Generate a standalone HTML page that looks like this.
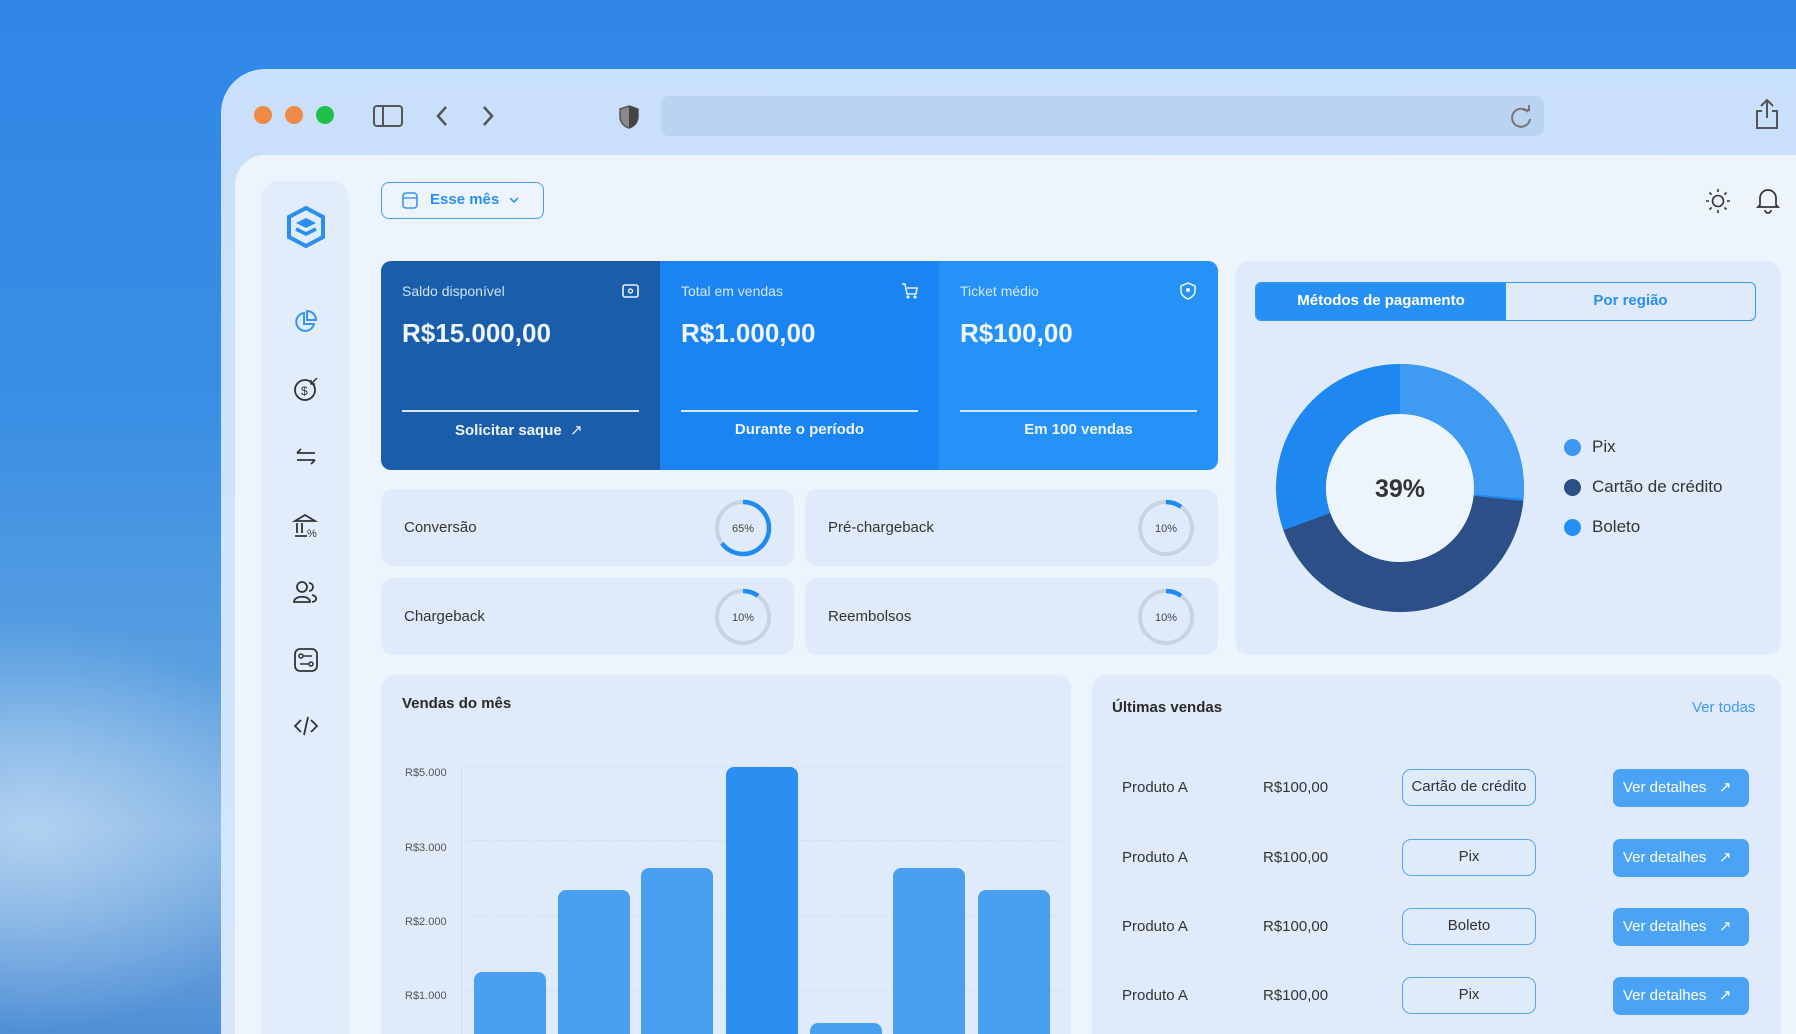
<!DOCTYPE html>
<html style="width:1796px;height:1034px;overflow:hidden"><head><meta charset="utf-8"><style>
*{margin:0;padding:0;box-sizing:border-box}
body{width:1796px;height:1034px;overflow:hidden;font-family:"Liberation Sans",sans-serif;position:relative;
background:linear-gradient(180deg,#2f86e6 0%,#3a8fe4 40%,#5a9fe0 65%,#7fb2e3 80%,#4f8fd6 100%);}
.cloud{position:absolute;left:-80px;top:620px;width:380px;height:414px;background:radial-gradient(ellipse at 30% 50%,rgba(220,235,250,.55),rgba(200,225,250,0) 70%)}
.win{position:absolute;left:221px;top:69px;width:1575px;height:965px;border-radius:44px 0 0 0;background:linear-gradient(180deg,#c9e0fa,#d6e7fb);}
.a{position:absolute}
.dot{position:absolute;top:106px;width:18px;height:18px;border-radius:50%}
.inner{position:absolute;left:235px;top:155px;width:1561px;height:879px;border-radius:30px 0 0 0;background:#edf4fd}
.side{position:absolute;left:261px;top:181px;width:88px;height:853px;border-radius:18px 18px 0 0;background:#e1edfb}
.card{position:absolute;background:#dfebfb;border-radius:12px}
.t{position:absolute;white-space:nowrap}
.pill{position:absolute;left:1402px;width:134px;height:37px;border:1.5px solid #5aa6f2;border-radius:9px;font-size:15px;color:#333;text-align:center;line-height:34px}
.btn{position:absolute;left:1613px;width:136px;height:38px;background:#4aa3f4;border-radius:7px;color:#fff;font-size:15px;line-height:38px;padding-left:10px}
.row{position:absolute;font-size:15px;color:#333}
.ylab{position:absolute;left:405px;font-size:11px;color:#555}
.bar{position:absolute;width:72px;background:#4aa0f0;border-radius:8px 8px 0 0;bottom:0}
</style></head><body>
<div class="cloud"></div>
<div class="win"></div>
<div class="dot" style="left:254px;background:#ee8a45"></div>
<div class="dot" style="left:285px;background:#ee8a45"></div>
<div class="dot" style="left:316px;background:#1fbf4a"></div>
<svg class="a" style="left:372px;top:104px" width="32" height="24" viewBox="0 0 32 24"><rect x="2" y="2" width="28" height="20" rx="3" fill="none" stroke="#555" stroke-width="2"/><line x1="11" y1="2" x2="11" y2="22" stroke="#555" stroke-width="2"/></svg>
<svg class="a" style="left:432px;top:104px" width="70" height="24"><path d="M14 3 L6 12 L14 21" fill="none" stroke="#555" stroke-width="2.5"/><path d="M52 3 L60 12 L52 21" fill="none" stroke="#555" stroke-width="2.5"/></svg>
<svg class="a" style="left:618px;top:104px" width="22" height="26"><path d="M11 2 L20 5 V13 C20 19 15 23 11 24 C7 23 2 19 2 13 V5 Z" fill="#888" stroke="#555" stroke-width="1.5"/><path d="M11 2 V24 C15 23 20 19 20 13 V5Z" fill="#444"/></svg>
<div class="a" style="left:661px;top:96px;width:883px;height:40px;border-radius:8px;background:#b9d3f1"></div>
<svg class="a" style="left:1508px;top:104px" width="26" height="26"><path d="M20 8 A9 9 0 1 0 22 15" fill="none" stroke="#777" stroke-width="2"/><path d="M15 6 H21 V1" fill="none" stroke="#777" stroke-width="2"/></svg>
<svg class="a" style="left:1754px;top:98px" width="26" height="32"><path d="M13 2 V20 M7 8 L13 2 L19 8" fill="none" stroke="#555" stroke-width="2"/><path d="M8 13 H3 V30 H23 V13 H18" fill="none" stroke="#555" stroke-width="2"/></svg>

<div class="inner"></div>
<div class="side"></div>
<svg class="a" style="left:286px;top:206px" width="40" height="42" viewBox="0 0 40 42"><path d="M20 2 L37 11 V31 L20 40 L3 31 V11Z" fill="none" stroke="#2a8ff0" stroke-width="4"/><path d="M20 12 L30 17 L20 22 L10 17Z" fill="#2a8ff0"/><path d="M10 23 L20 28 L30 23" fill="none" stroke="#2a8ff0" stroke-width="3.5"/></svg>
<svg class="a" style="left:293px;top:309px" width="26" height="26"><path d="M11 4 A9 9 0 1 0 21 15 H11Z" fill="none" stroke="#3a95f0" stroke-width="2"/><path d="M14 2 A9 9 0 0 1 23 11 H14Z" fill="none" stroke="#3a95f0" stroke-width="2"/></svg>
<svg class="a" style="left:293px;top:376px" width="26" height="26"><circle cx="12" cy="14" r="10" fill="none" stroke="#333" stroke-width="1.8"/><text x="8" y="19" font-size="12" fill="#333" font-family="Liberation Sans">$</text><path d="M24 2 L18 8 M18 4 V8 H22" stroke="#333" fill="none" stroke-width="1.5"/></svg>
<svg class="a" style="left:293px;top:445px" width="26" height="24"><path d="M4 8 H22 M8 4 L4 8 M4 15 H22 M18 19 L22 15" fill="none" stroke="#333" stroke-width="1.8"/></svg>
<svg class="a" style="left:292px;top:512px" width="28" height="28"><path d="M3 9 L13 3 L23 9 Z M5 11 V21 M10 11 V21 M3 24 H15" fill="none" stroke="#333" stroke-width="1.8"/><text x="15" y="25" font-size="11" fill="#333" font-family="Liberation Sans">%</text></svg>
<svg class="a" style="left:292px;top:580px" width="28" height="26"><circle cx="10" cy="7" r="5" fill="none" stroke="#333" stroke-width="1.8"/><path d="M2 22 C2 15 18 15 18 22 Z" fill="none" stroke="#333" stroke-width="1.8"/><path d="M17 3 A4 4 0 0 1 17 11 M20 15 C25 16 26 21 20 22" fill="none" stroke="#333" stroke-width="1.8"/></svg>
<svg class="a" style="left:293px;top:647px" width="26" height="26"><rect x="2" y="2" width="22" height="22" rx="5" fill="none" stroke="#333" stroke-width="1.8"/><circle cx="8" cy="9" r="2" fill="none" stroke="#333" stroke-width="1.5"/><path d="M10 9 H19 M7 17 H16" stroke="#333" stroke-width="1.5"/><circle cx="18" cy="17" r="2" fill="none" stroke="#333" stroke-width="1.5"/></svg>
<svg class="a" style="left:293px;top:715px" width="26" height="22"><path d="M8 5 L2 11 L8 17 M18 5 L24 11 L18 17 M15 2 L11 20" fill="none" stroke="#333" stroke-width="1.8"/></svg>

<div class="a" style="left:381px;top:182px;width:163px;height:37px;border:1.5px solid #4a9cf0;border-radius:8px"></div>
<svg class="a" style="left:402px;top:191px" width="16" height="18"><rect x="1" y="2" width="14" height="15" rx="3" fill="none" stroke="#3a95f0" stroke-width="1.6"/><line x1="1" y1="7" x2="15" y2="7" stroke="#3a95f0" stroke-width="1.4"/></svg>
<div class="t" style="left:430px;top:191px;font-size:15px;color:#2a8ff0;font-weight:bold">Esse mês</div>
<svg class="a" style="left:508px;top:195px" width="12" height="10"><path d="M2 3 L6 7 L10 3" fill="none" stroke="#3a95f0" stroke-width="1.6"/></svg>
<svg class="a" style="left:1704px;top:187px" width="28" height="28"><circle cx="14" cy="14" r="5.5" fill="none" stroke="#333" stroke-width="1.6"/><path d="M14 2V5M14 23V26M2 14H5M23 14H26M5.5 5.5L7.6 7.6M20.4 20.4L22.5 22.5M5.5 22.5L7.6 20.4M20.4 7.6L22.5 5.5" stroke="#333" stroke-width="1.6"/></svg>
<svg class="a" style="left:1755px;top:186px" width="26" height="28"><path d="M5 19 V12 A8 8 0 0 1 21 12 V19 L23 21 H3Z" fill="none" stroke="#333" stroke-width="1.7"/><path d="M10 24 A3 3 0 0 0 16 24" fill="none" stroke="#333" stroke-width="1.7"/></svg>

<div class="a" style="left:381px;top:261px;width:837px;height:209px;border-radius:10px;overflow:hidden;display:flex">
<div style="width:279px;background:#1a5eab"></div>
<div style="width:279px;background:#1b84f3"></div>
<div style="width:279px;background:#2592f7"></div>
</div>
<div class="t" style="left:402px;top:283px;font-size:14px;color:#cfe1f7">Saldo disponível</div>
<div class="t" style="left:681px;top:283px;font-size:14px;color:#d6e8fd">Total em vendas</div>
<div class="t" style="left:960px;top:283px;font-size:14px;color:#d6e8fd">Ticket médio</div>
<div class="t" style="left:402px;top:318px;font-size:26px;font-weight:bold;color:#f0f6fe">R$15.000,00</div>
<div class="t" style="left:681px;top:318px;font-size:26px;font-weight:bold;color:#f0f6fe">R$1.000,00</div>
<div class="t" style="left:960px;top:318px;font-size:26px;font-weight:bold;color:#f0f6fe">R$100,00</div>
<svg class="a" style="left:622px;top:283px" width="18" height="16"><rect x="1" y="2" width="15" height="12" rx="2" fill="none" stroke="#e6f0fc" stroke-width="1.6"/><circle cx="8.5" cy="8" r="2" fill="none" stroke="#e6f0fc" stroke-width="1.4"/></svg>
<svg class="a" style="left:901px;top:282px" width="18" height="18"><path d="M1 2 H4 L6 12 H15 L16 6 H6" fill="none" stroke="#e6f0fc" stroke-width="1.6"/><circle cx="7" cy="15" r="1.6" fill="#e6f0fc"/><circle cx="14" cy="15" r="1.6" fill="#e6f0fc"/></svg>
<svg class="a" style="left:1180px;top:282px" width="16" height="18"><path d="M8 1 L15 4 V9 C15 13 11 16 8 17 C5 16 1 13 1 9 V4Z" fill="none" stroke="#e6f0fc" stroke-width="1.6"/><circle cx="8" cy="8" r="2" fill="#e6f0fc"/></svg>
<div class="a" style="left:402px;top:410px;width:237px;height:2px;background:#d6e5f8"></div>
<div class="a" style="left:681px;top:410px;width:237px;height:2px;background:#d6e5f8"></div>
<div class="a" style="left:960px;top:410px;width:237px;height:2px;background:#d6e5f8"></div>
<div class="t" style="left:455px;top:421px;font-size:15px;color:#eef5fe;font-weight:bold">Solicitar saque <span style="font-weight:normal">&nbsp;↗</span></div>
<div class="t" style="left:681px;width:237px;text-align:center;top:421px;font-size:15px;color:#eef5fe;font-weight:bold">Durante o período</div>
<div class="t" style="left:960px;width:237px;text-align:center;top:421px;font-size:15px;color:#eef5fe;font-weight:bold">Em 100 vendas</div>

<div class="card" style="left:381px;top:489px;width:413px;height:77px"></div>
<div class="card" style="left:805px;top:489px;width:413px;height:77px"></div>
<div class="card" style="left:381px;top:578px;width:413px;height:77px"></div>
<div class="card" style="left:805px;top:578px;width:413px;height:77px"></div>
<div class="t" style="left:404px;top:519px;font-size:15px;color:#333">Conversão</div>
<div class="t" style="left:828px;top:519px;font-size:15px;color:#333">Pré-chargeback</div>
<div class="t" style="left:404px;top:608px;font-size:15px;color:#333">Chargeback</div>
<div class="t" style="left:828px;top:608px;font-size:15px;color:#333">Reembolsos</div>
<svg class="a" style="left:713px;top:498px" width="60" height="60"><circle cx="30" cy="30" r="26" fill="none" stroke="#c8d3e0" stroke-width="4"/><circle cx="30" cy="30" r="26" fill="none" stroke="#1f8bf2" stroke-width="4.5" stroke-dasharray="106 200" transform="rotate(-90 30 30)"/><text x="30" y="34" text-anchor="middle" font-size="11" fill="#444" font-family="Liberation Sans">65%</text></svg>
<svg class="a" style="left:1136px;top:498px" width="60" height="60"><circle cx="30" cy="30" r="26" fill="none" stroke="#c8d3e0" stroke-width="4"/><circle cx="30" cy="30" r="26" fill="none" stroke="#1f8bf2" stroke-width="4.5" stroke-dasharray="16 200" transform="rotate(-90 30 30)"/><text x="30" y="34" text-anchor="middle" font-size="11" fill="#444" font-family="Liberation Sans">10%</text></svg>
<svg class="a" style="left:713px;top:587px" width="60" height="60"><circle cx="30" cy="30" r="26" fill="none" stroke="#c8d3e0" stroke-width="4"/><circle cx="30" cy="30" r="26" fill="none" stroke="#1f8bf2" stroke-width="4.5" stroke-dasharray="16 200" transform="rotate(-90 30 30)"/><text x="30" y="34" text-anchor="middle" font-size="11" fill="#444" font-family="Liberation Sans">10%</text></svg>
<svg class="a" style="left:1136px;top:587px" width="60" height="60"><circle cx="30" cy="30" r="26" fill="none" stroke="#c8d3e0" stroke-width="4"/><circle cx="30" cy="30" r="26" fill="none" stroke="#1f8bf2" stroke-width="4.5" stroke-dasharray="16 200" transform="rotate(-90 30 30)"/><text x="30" y="34" text-anchor="middle" font-size="11" fill="#444" font-family="Liberation Sans">10%</text></svg>

<div class="card" style="left:1235px;top:261px;width:546px;height:394px;border-radius:14px"></div>
<div class="a" style="left:1255px;top:282px;width:501px;height:39px;border:1.5px solid #3b97f0;border-radius:6px;overflow:hidden;display:flex">
<div style="width:250px;background:#2690f4;color:#fff;font-size:15px;font-weight:bold;text-align:center;line-height:36px">Métodos de pagamento</div>
<div style="flex:1;color:#2a8ff0;font-size:15px;font-weight:bold;text-align:center;line-height:36px">Por região</div></div>
<svg class="a" style="left:1270px;top:358px" width="260" height="260" viewBox="0 0 260 260">
<g transform="rotate(-90 130 130)" fill="none" stroke-width="50">
<circle cx="130" cy="130" r="99" stroke="#1e88f0" stroke-dasharray="622 622"/>
<circle cx="130" cy="130" r="99" stroke="#2b4f86" stroke-dasharray="0 166 266 200"/>
<circle cx="130" cy="130" r="99" stroke="#3f9af2" stroke-dasharray="164 500"/>
</g>
<circle cx="130" cy="130" r="74" fill="#edf4fd"/>
<text x="130" y="139" text-anchor="middle" font-size="25" font-weight="bold" fill="#333" font-family="Liberation Sans">39%</text></svg>
<div class="a" style="left:1564px;top:439px;width:17px;height:17px;border-radius:50%;background:#3b97f0"></div>
<div class="a" style="left:1564px;top:479px;width:17px;height:17px;border-radius:50%;background:#2b4f86"></div>
<div class="a" style="left:1564px;top:519px;width:17px;height:17px;border-radius:50%;background:#2690f4"></div>
<div class="t" style="left:1592px;top:437px;font-size:17px;color:#333">Pix</div>
<div class="t" style="left:1592px;top:477px;font-size:17px;color:#333">Cartão de crédito</div>
<div class="t" style="left:1592px;top:517px;font-size:17px;color:#333">Boleto</div>

<div class="card" style="left:381px;top:675px;width:690px;height:359px;border-radius:14px 14px 0 0"></div>
<div class="t" style="left:402px;top:695px;font-size:15px;font-weight:bold;color:#2a2a2a">Vendas do mês</div>
<div class="ylab" style="top:767px">R$5.000</div>
<div class="ylab" style="top:842px">R$3.000</div>
<div class="ylab" style="top:916px">R$2.000</div>
<div class="ylab" style="top:990px">R$1.000</div>
<div class="a" style="left:461px;top:765px;width:1px;height:269px;background:#d3dde9"></div>
<div class="a" style="left:466px;top:766px;width:596px;border-top:1px dashed #d3dfee"></div>
<div class="a" style="left:466px;top:840px;width:596px;border-top:1px dashed #d3dfee"></div>
<div class="a" style="left:466px;top:915px;width:596px;border-top:1px dashed #d3dfee"></div>
<div class="a" style="left:466px;top:990px;width:596px;border-top:1px dashed #d3dfee"></div>
<div class="bar" style="left:474px;height:62px"></div>
<div class="bar" style="left:558px;height:144px"></div>
<div class="bar" style="left:641px;height:166px"></div>
<div class="bar" style="left:726px;height:267px;background:#2a8ff0"></div>
<div class="bar" style="left:810px;height:11px"></div>
<div class="bar" style="left:893px;height:166px"></div>
<div class="bar" style="left:978px;height:144px"></div>

<div class="card" style="left:1092px;top:675px;width:689px;height:359px;border-radius:14px 14px 0 0"></div>
<div class="t" style="left:1112px;top:699px;font-size:15px;font-weight:bold;color:#2a2a2a">Últimas vendas</div>
<div class="t" style="left:1692px;top:699px;font-size:15px;color:#3f9af2">Ver todas</div>

<div class="row" style="left:1122px;top:779px">Produto A</div><div class="row" style="left:1263px;top:779px">R$100,00</div>
<div class="pill" style="top:769px">Cartão de crédito</div><div class="btn" style="top:769px">Ver detalhes &nbsp;&nbsp;↗</div>
<div class="row" style="left:1122px;top:849px">Produto A</div><div class="row" style="left:1263px;top:849px">R$100,00</div>
<div class="pill" style="top:839px">Pix</div><div class="btn" style="top:839px">Ver detalhes &nbsp;&nbsp;↗</div>
<div class="row" style="left:1122px;top:918px">Produto A</div><div class="row" style="left:1263px;top:918px">R$100,00</div>
<div class="pill" style="top:908px">Boleto</div><div class="btn" style="top:908px">Ver detalhes &nbsp;&nbsp;↗</div>
<div class="row" style="left:1122px;top:987px">Produto A</div><div class="row" style="left:1263px;top:987px">R$100,00</div>
<div class="pill" style="top:977px">Pix</div><div class="btn" style="top:977px">Ver detalhes &nbsp;&nbsp;↗</div>
</body></html>
